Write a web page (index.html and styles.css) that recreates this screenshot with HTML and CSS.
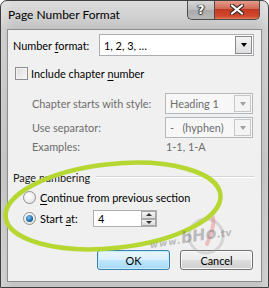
FILE: index.html
```html
<!DOCTYPE html>
<html lang="en">
<head>
    <meta charset="utf-8">
    <title>Page Number Format</title>
    <link rel="stylesheet" href="styles.css">
</head>
<body>
<div class="window">
    <div class="titlebar">
        <span class="title">Page Number Format</span>
        <div class="caption">
            <span class="cap help">?</span>
            <span class="cap close">
                <svg width="14" height="11" viewBox="0 0 14 11"><path d="M2 1.5 L12 9.5 M12 1.5 L2 9.5" stroke="#3a2a28" stroke-width="4.2" stroke-linecap="round"/><path d="M2 1.5 L12 9.5 M12 1.5 L2 9.5" stroke="#fff" stroke-width="2.2" stroke-linecap="round"/></svg>
            </span>
        </div>
    </div>

    <div class="client">
        <div class="row fmt-row">
            <span class="lbl fmt-lbl">Number <u>f</u>ormat:</span>
            <div class="combo fmt-combo">
                <span class="val">1, 2, 3, …</span>
                <span class="drop"><i class="arrow"></i></span>
            </div>
        </div>

        <div class="row check-row">
            <span class="checkbox"></span>
            <span>Include chapter <u>n</u>umber</span>
        </div>

        <div class="sub">
            <div class="row sub-row first">
                <span class="lbl sub-lbl">Chapter starts with style:</span>
                <div class="combo dis">
                    <span class="val">Heading 1</span>
                    <span class="drop"><i class="arrow"></i></span>
                </div>
            </div>
            <div class="row sub-row">
                <span class="lbl sub-lbl">Use separator:</span>
                <div class="combo dis">
                    <span class="val">-&nbsp;&nbsp;&nbsp;(hyphen)</span>
                    <span class="drop"><i class="arrow"></i></span>
                </div>
            </div>
            <div class="row ex-row">
                <span class="lbl sub-lbl">Examples:</span>
                <span class="ex-val">1-1, 1-A</span>
            </div>
        </div>

        <div class="row group-title">
            <span>Page numbering</span>
            <span class="etch"></span>
        </div>

        <div class="row radio-row r1">
            <span class="radio"></span>
            <span><u>C</u>ontinue from previous section</span>
        </div>
        <div class="row radio-row r2">
            <span class="radio on"></span>
            <span class="start-lbl">Start <u>a</u>t:</span>
            <div class="spin">
                <span class="val">4</span>
                <span class="spin-btns">
                    <span class="sbtn"><i class="arrow up"></i></span>
                    <span class="sbtn"><i class="arrow"></i></span>
                </span>
            </div>
        </div>

        <div class="row buttons">
            <span class="btn ok">OK</span>
            <span class="btn">Cancel</span>
        </div>
    </div>

    <svg class="marks" width="269" height="288" viewBox="0 0 269 288">
        <circle cx="206" cy="236" r="17" fill="none" stroke="rgba(160,160,160,0.35)" stroke-width="3"/>
        <path d="M213 217 C215 225 211 235 207 244" stroke="rgba(225,100,100,0.35)" stroke-width="4" fill="none" stroke-linecap="round"/>
        <ellipse cx="113" cy="206" rx="108" ry="42" transform="rotate(-6 113 206)" fill="none" stroke="#b6d632" stroke-width="4.5"/>
    </svg>
    <div class="watermark"><span class="w3">www.</span><span class="bho">bHo</span><span class="tv">.tv</span></div>
</div>
</body>
</html>
```

FILE: styles.css
```css
body {
    margin: 0;
    font-family: Lato, "Noto Sans", sans-serif;
    font-size: 10.9px;
    color: #000;
}
u {
    text-decoration-thickness: 1px;
    text-underline-offset: 2px;
}
.window {
    position: relative;
    width: 269px;
    height: 288px;
    box-sizing: border-box;
    border: 1px solid #3f3f3f;
    border-radius: 7px 7px 0 0;
    padding: 0 6px 5px 6px;
    overflow: hidden;
    display: flex;
    flex-direction: column;
    background:
        linear-gradient(90deg, rgba(255,255,255,0.25), rgba(255,255,255,0) 12px, rgba(0,0,0,0) 255px, rgba(255,255,255,0.25)),
        linear-gradient(#dcdcdc, #d2d2d2 14px, #c3c3c3 28px, #b8b8b8 60%, #c4c4c4);
}

/* title bar */
.titlebar {
    height: 28px;
    display: flex;
    justify-content: space-between;
    align-items: flex-start;
    padding-left: 1px;
}
.title {
    margin-top: 6px;
    font-size: 12px;
}
.caption {
    display: flex;
    margin-top: -1px;
    margin-right: 2px;
}
.cap {
    height: 20px;
    box-sizing: border-box;
    border: 1px solid #4c4c4c;
    border-top: none;
    display: flex;
    align-items: center;
    justify-content: center;
}
.help {
    width: 27px;
    border-radius: 0 0 0 5px;
    border-right: none;
    background: linear-gradient(#d9d9d9, #bdbdbd 50%, #a9a9a9 51%, #b8b8b8);
    color: #fff;
    font-family: "DejaVu Sans", sans-serif;
    font-weight: bold;
    font-size: 12px;
    text-shadow: 0 0 1px #333, 1px 0 1px #333, -1px 0 1px #333, 0 1px 1px #333;
}
.close {
    width: 46px;
    border-radius: 0 0 5px 0;
    background: linear-gradient(#e8a293, #d26b56 45%, #c23a23 50%, #d2462c 85%, #e2785b);
}

/* client area */
.client {
    flex: 1;
    background: #f0f0f0;
    border: 1px solid #8d8d8d;
    padding: 4px 7px 0 5px;
    display: flex;
    flex-direction: column;
}
.row {
    display: flex;
    align-items: center;
}
.fmt-row {
    height: 22px;
}
.fmt-lbl {
    width: 86px;
}
.combo {
    height: 100%;
    box-sizing: border-box;
    border: 1px solid #abadb3;
    background: #fff;
    display: flex;
    align-items: center;
}
.fmt-combo {
    width: 155px;
}
.combo .val {
    flex: 1;
    padding-left: 4px;
}
.drop {
    width: 15px;
    align-self: stretch;
    margin: 1px;
    border: 1px solid #8a8a8a;
    background: linear-gradient(#f4f4f4, #dedede);
    display: flex;
    align-items: center;
    justify-content: center;
}
.arrow {
    width: 0;
    height: 0;
    border-left: 3.5px solid transparent;
    border-right: 3.5px solid transparent;
    border-top: 4px solid #000;
}
.arrow.up {
    border-top: none;
    border-bottom: 4px solid #000;
}

.check-row {
    margin-top: 8px;
    height: 18px;
}
.checkbox {
    width: 13px;
    height: 13px;
    box-sizing: border-box;
    margin: 0 3px 0 2px;
    border: 1px solid #8e8f8f;
    background: linear-gradient(135deg, #dcdcdc, #f8f8f8);
    box-shadow: inset 0 0 0 1px #f4f4f4;
}

/* disabled chapter block */
.sub {
    padding-left: 19px;
    color: #6d6d6d;
}
.sub-row {
    height: 21px;
    margin-top: 3px;
}
.sub-row.first {
    margin-top: 11px;
}
.sub-lbl {
    width: 133px;
}
.combo.dis {
    width: 88px;
    background: #f7f7f7;
    border-color: #b4b8bb;
}
.combo.dis .drop {
    border-color: #c7c7c7;
    background: #f4f4f4;
}
.combo.dis .arrow {
    border-top-color: #a0a0a0;
}
.ex-row {
    height: 16px;
}
.ex-val {
    padding-left: 1px;
}

/* page numbering group */
.group-title {
    margin-top: 14px;
    height: 18px;
    color: #1a1a1a;
}
.etch {
    flex: 1;
    margin-left: 6px;
    border-top: 1px solid #d5d5d5;
    border-bottom: 1px solid #fff;
}
.radio-row {
    padding-left: 10px;
}
.r1 {
    margin-top: 3px;
    height: 16px;
}
.r2 {
    margin-top: 5px;
    height: 17px;
}
.radio {
    width: 13px;
    height: 13px;
    box-sizing: border-box;
    border-radius: 50%;
    margin-right: 4px;
    border: 1px solid #8e8f8f;
    background: radial-gradient(circle at 40% 35%, #fff, #dedede);
    display: flex;
    align-items: center;
    justify-content: center;
}
.radio.on::after {
    content: "";
    width: 7px;
    height: 7px;
    border-radius: 50%;
    background: radial-gradient(circle at 40% 35%, #7fc4f0, #1b6aa8 60%, #0c3d6b);
}
.start-lbl {
    width: 53px;
}
.spin {
    width: 64px;
    height: 100%;
    box-sizing: border-box;
    border: 1px solid #abadb3;
    background: #fff;
    display: flex;
    align-items: center;
}
.spin .val {
    flex: 1;
    padding-left: 4px;
}
.spin-btns {
    width: 15px;
    align-self: stretch;
    display: flex;
    flex-direction: column;
}
.sbtn {
    flex: 1;
    border: 1px solid #a8a8a8;
    background: linear-gradient(#f4f4f4, #dcdcdc);
    display: flex;
    align-items: center;
    justify-content: center;
}
.sbtn .arrow {
    border-left-width: 3px;
    border-right-width: 3px;
    border-top-width: 3px;
    border-top-color: #333;
}
.sbtn .arrow.up {
    border-bottom: 3px solid #333;
}

/* buttons */
.buttons {
    margin-top: 23px;
    height: 20px;
    justify-content: flex-end;
    gap: 10px;
    padding-right: 1px;
}
.btn {
    width: 73px;
    height: 20px;
    box-sizing: border-box;
    border: 1px solid #707070;
    border-radius: 3px;
    background: linear-gradient(#f2f2f2, #ebebeb 50%, #dddddd 51%, #cfcfcf);
    box-shadow: inset 0 0 0 1px #fbfbfb;
    display: flex;
    align-items: center;
    justify-content: center;
}
.btn.ok {
    border-color: #3c7fb1;
    background: linear-gradient(#eaf6fd, #d9f0fc 50%, #bee6fd 51%, #a7d9f5);
    box-shadow: inset 0 0 0 1px #c5ecfc;
}

/* overlays drawn on top of the screenshot */
.marks {
    position: absolute;
    left: -1px;
    top: -1px;
    pointer-events: none;
}
.watermark {
    position: absolute;
    left: 148px;
    top: 226px;
    transform: rotate(-9deg);
    color: rgba(110, 110, 110, 0.42);
    font-family: "DejaVu Sans", sans-serif;
    font-style: italic;
    font-weight: bold;
    white-space: nowrap;
    pointer-events: none;
}
.w3 {
    font-size: 9px;
    letter-spacing: 1px;
}
.bho {
    font-size: 16px;
}
.tv {
    font-size: 10px;
}
```
